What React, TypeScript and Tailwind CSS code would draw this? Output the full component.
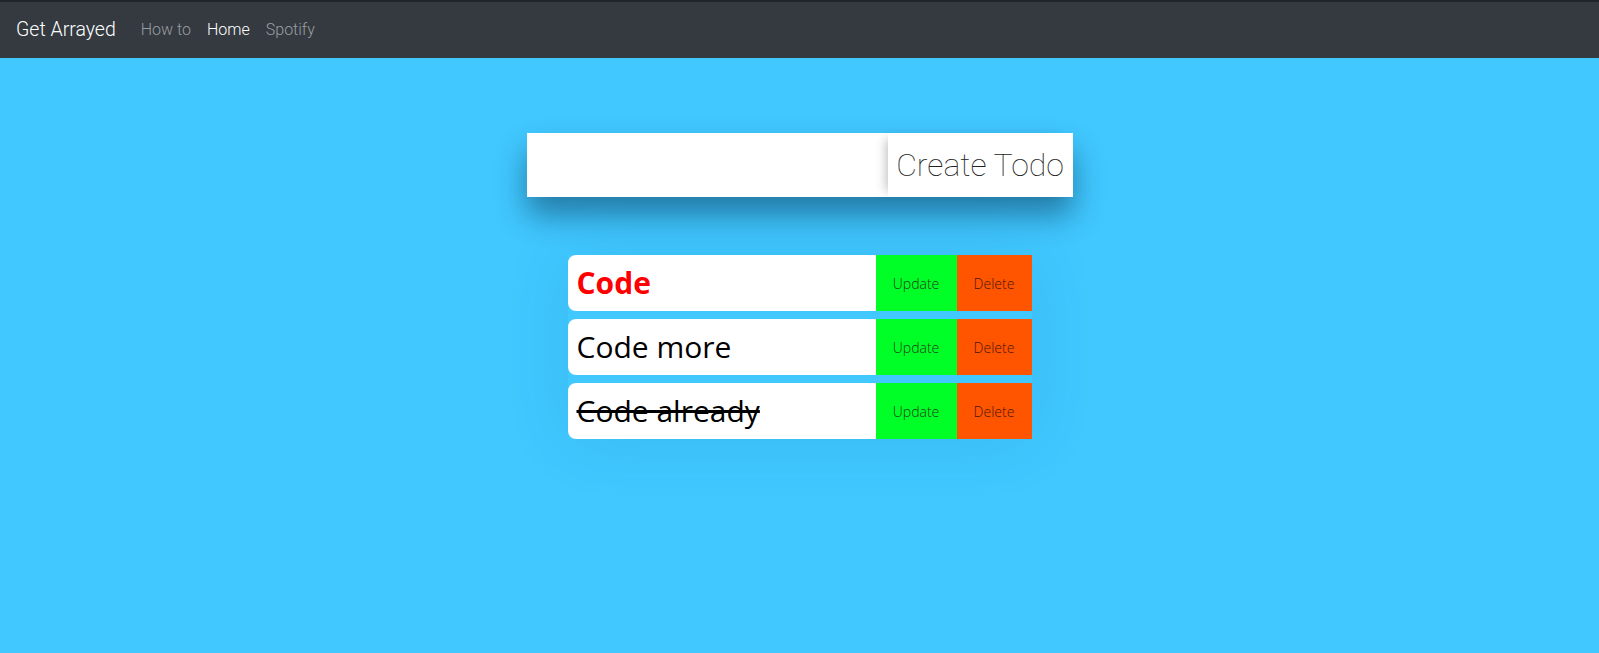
import { useState } from "react";

type Todo = { text: string; important?: boolean; done?: boolean };

const initialTodos: Todo[] = [
  { text: "Code", important: true },
  { text: "Code more" },
  { text: "Code already", done: true },
];

const NavBar = () => (
  <nav className="h-[58px] bg-[#343a40] border-t-2 border-[#212529] flex items-center px-4 font-['Roboto',sans-serif]">
    <span className="text-[19.5px] font-light text-white mr-[25px]">Get Arrayed</span>
    <a className="text-[16px] font-light text-[#9a9da0] mr-[16px]">How to</a>
    <a className="text-[16px] font-light text-white mr-[16px]">Home</a>
    <a className="text-[16px] font-light text-[#9a9da0]">Spotify</a>
  </nav>
);

const TodoRow = ({ todo }: { todo: Todo }) => (
  <div className="flex h-[56px]">
    <div className="w-[308px] bg-white rounded-l-[8px] flex items-center pl-[9px]">
      <span
        className={
          "text-[30px] leading-none font-['Open_Sans',sans-serif] " +
          (todo.important ? "font-bold text-[#ff0000]" : "text-black") +
          (todo.done ? " line-through decoration-[3px]" : "")
        }
      >
        {todo.text}
      </span>
    </div>
    <button className="w-[81px] bg-[#00ff26] text-[14px] font-light text-[#1a3a1a] font-['Open_Sans',sans-serif]">
      Update
    </button>
    <button className="w-[75px] bg-[#ff5400] text-[14px] font-light text-[#4a1500] font-['Open_Sans',sans-serif]">
      Delete
    </button>
  </div>
);

export default function App() {
  const [todos] = useState(initialTodos);
  return (
    <div className="min-h-[653px] bg-[#40c8ff]">
      <NavBar />
      <div className="flex flex-col items-center pt-[75px]">
        <div className="w-[546px] h-[64px] bg-white flex shadow-[0_18px_30px_rgba(0,30,60,0.45)]">
          <input className="flex-1 outline-none px-3" />
          <button className="w-[185px] bg-white text-[32px] font-thin text-[#222] font-['Roboto',sans-serif] shadow-[-8px_0_10px_-6px_rgba(0,0,0,0.25)]">
            Create Todo
          </button>
        </div>
        <div className="mt-[58px] flex flex-col gap-[8px] w-[464px] shadow-[0_0_60px_rgba(0,80,140,0.12)]">
          {todos.map((t) => (
            <TodoRow key={t.text} todo={t} />
          ))}
        </div>
      </div>
    </div>
  );
}
